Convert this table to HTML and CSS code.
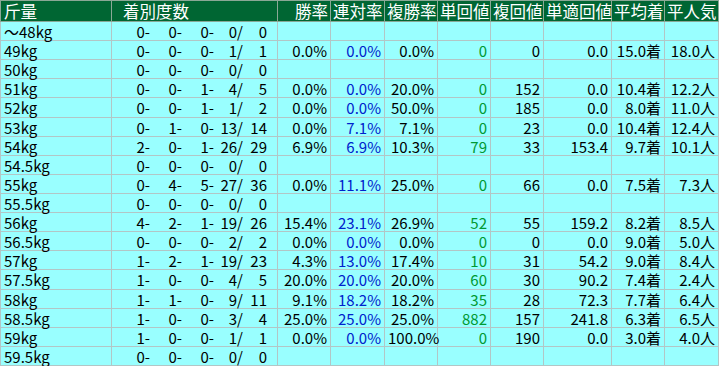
FILE: index.html
```html
<!DOCTYPE html>
<html lang="ja">
<head>
<meta charset="utf-8">
<title>斤量別成績</title>
<link rel="stylesheet" href="styles.css">
</head>
<body>
<table class="stats">
  <colgroup>
    <col class="c-w">
    <col class="c-rec">
    <col class="c-a">
    <col class="c-b">
    <col class="c-a">
    <col class="c-a">
    <col class="c-a">
    <col class="c-c">
    <col class="c-a">
    <col class="c-b">
    <col class="c-x">
  </colgroup>
  <thead>
    <tr>
      <th class="h-left">斤量</th>
      <th class="h-rec">着別度数</th>
      <th>勝率</th>
      <th>連対率</th>
      <th>複勝率</th>
      <th>単回値</th>
      <th>複回値</th>
      <th>単適回値</th>
      <th>平均着</th>
      <th>平人気</th>
      <th></th>
    </tr>
  </thead>
  <tbody>
    <tr><td class="w">〜48kg</td><td class="rec"><span class="f">0-</span><span class="f">0-</span><span class="f">0-</span><span class="f f4">0/</span><span class="f f5">0</span></td><td></td><td></td><td></td><td></td><td></td><td></td><td></td><td></td><td></td></tr>
    <tr><td class="w">49kg</td><td class="rec"><span class="f">0-</span><span class="f">0-</span><span class="f">0-</span><span class="f f4">1/</span><span class="f f5">1</span></td><td>0.0%</td><td class="blue">0.0%</td><td>0.0%</td><td class="green">0</td><td>0</td><td>0.0</td><td>15.0<span class="j">着</span></td><td>18.0<span class="j">人</span></td><td></td></tr>
    <tr><td class="w">50kg</td><td class="rec"><span class="f">0-</span><span class="f">0-</span><span class="f">0-</span><span class="f f4">0/</span><span class="f f5">0</span></td><td></td><td></td><td></td><td></td><td></td><td></td><td></td><td></td><td></td></tr>
    <tr><td class="w">51kg</td><td class="rec"><span class="f">0-</span><span class="f">0-</span><span class="f">1-</span><span class="f f4">4/</span><span class="f f5">5</span></td><td>0.0%</td><td class="blue">0.0%</td><td>20.0%</td><td class="green">0</td><td>152</td><td>0.0</td><td>10.4<span class="j">着</span></td><td>12.2<span class="j">人</span></td><td></td></tr>
    <tr><td class="w">52kg</td><td class="rec"><span class="f">0-</span><span class="f">0-</span><span class="f">1-</span><span class="f f4">1/</span><span class="f f5">2</span></td><td>0.0%</td><td class="blue">0.0%</td><td>50.0%</td><td class="green">0</td><td>185</td><td>0.0</td><td>8.0<span class="j">着</span></td><td>11.0<span class="j">人</span></td><td></td></tr>
    <tr><td class="w">53kg</td><td class="rec"><span class="f">0-</span><span class="f">1-</span><span class="f">0-</span><span class="f f4">13/</span><span class="f f5">14</span></td><td>0.0%</td><td class="blue">7.1%</td><td>7.1%</td><td class="green">0</td><td>23</td><td>0.0</td><td>10.4<span class="j">着</span></td><td>12.4<span class="j">人</span></td><td></td></tr>
    <tr><td class="w">54kg</td><td class="rec"><span class="f">2-</span><span class="f">0-</span><span class="f">1-</span><span class="f f4">26/</span><span class="f f5">29</span></td><td>6.9%</td><td class="blue">6.9%</td><td>10.3%</td><td class="green">79</td><td>33</td><td>153.4</td><td>9.7<span class="j">着</span></td><td>10.1<span class="j">人</span></td><td></td></tr>
    <tr><td class="w">54.5kg</td><td class="rec"><span class="f">0-</span><span class="f">0-</span><span class="f">0-</span><span class="f f4">0/</span><span class="f f5">0</span></td><td></td><td></td><td></td><td></td><td></td><td></td><td></td><td></td><td></td></tr>
    <tr><td class="w">55kg</td><td class="rec"><span class="f">0-</span><span class="f">4-</span><span class="f">5-</span><span class="f f4">27/</span><span class="f f5">36</span></td><td>0.0%</td><td class="blue">11.1%</td><td>25.0%</td><td class="green">0</td><td>66</td><td>0.0</td><td>7.5<span class="j">着</span></td><td>7.3<span class="j">人</span></td><td></td></tr>
    <tr><td class="w">55.5kg</td><td class="rec"><span class="f">0-</span><span class="f">0-</span><span class="f">0-</span><span class="f f4">0/</span><span class="f f5">0</span></td><td></td><td></td><td></td><td></td><td></td><td></td><td></td><td></td><td></td></tr>
    <tr><td class="w">56kg</td><td class="rec"><span class="f">4-</span><span class="f">2-</span><span class="f">1-</span><span class="f f4">19/</span><span class="f f5">26</span></td><td>15.4%</td><td class="blue">23.1%</td><td>26.9%</td><td class="green">52</td><td>55</td><td>159.2</td><td>8.2<span class="j">着</span></td><td>8.5<span class="j">人</span></td><td></td></tr>
    <tr><td class="w">56.5kg</td><td class="rec"><span class="f">0-</span><span class="f">0-</span><span class="f">0-</span><span class="f f4">2/</span><span class="f f5">2</span></td><td>0.0%</td><td class="blue">0.0%</td><td>0.0%</td><td class="green">0</td><td>0</td><td>0.0</td><td>9.0<span class="j">着</span></td><td>5.0<span class="j">人</span></td><td></td></tr>
    <tr><td class="w">57kg</td><td class="rec"><span class="f">1-</span><span class="f">2-</span><span class="f">1-</span><span class="f f4">19/</span><span class="f f5">23</span></td><td>4.3%</td><td class="blue">13.0%</td><td>17.4%</td><td class="green">10</td><td>31</td><td>54.2</td><td>9.0<span class="j">着</span></td><td>8.4<span class="j">人</span></td><td></td></tr>
    <tr><td class="w">57.5kg</td><td class="rec"><span class="f">1-</span><span class="f">0-</span><span class="f">0-</span><span class="f f4">4/</span><span class="f f5">5</span></td><td>20.0%</td><td class="blue">20.0%</td><td>20.0%</td><td class="green">60</td><td>30</td><td>90.2</td><td>7.4<span class="j">着</span></td><td>2.4<span class="j">人</span></td><td></td></tr>
    <tr><td class="w">58kg</td><td class="rec"><span class="f">1-</span><span class="f">1-</span><span class="f">0-</span><span class="f f4">9/</span><span class="f f5">11</span></td><td>9.1%</td><td class="blue">18.2%</td><td>18.2%</td><td class="green">35</td><td>28</td><td>72.3</td><td>7.7<span class="j">着</span></td><td>6.4<span class="j">人</span></td><td></td></tr>
    <tr><td class="w">58.5kg</td><td class="rec"><span class="f">1-</span><span class="f">0-</span><span class="f">0-</span><span class="f f4">3/</span><span class="f f5">4</span></td><td>25.0%</td><td class="blue">25.0%</td><td>25.0%</td><td class="green">882</td><td>157</td><td>241.8</td><td>6.3<span class="j">着</span></td><td>6.5<span class="j">人</span></td><td></td></tr>
    <tr><td class="w">59kg</td><td class="rec"><span class="f">1-</span><span class="f">0-</span><span class="f">0-</span><span class="f f4">1/</span><span class="f f5">1</span></td><td>0.0%</td><td class="blue">0.0%</td><td>100.0%</td><td class="green">0</td><td>190</td><td>0.0</td><td>3.0<span class="j">着</span></td><td>4.0<span class="j">人</span></td><td></td></tr>
    <tr><td class="w">59.5kg</td><td class="rec"><span class="f">0-</span><span class="f">0-</span><span class="f">0-</span><span class="f f4">0/</span><span class="f f5">0</span></td><td></td><td></td><td></td><td></td><td></td><td></td><td></td><td></td><td></td></tr>
  </tbody>
</table>
</body>
</html>
```
FILE: styles.css
```css
html, body {
  margin: 0;
  padding: 0;
  background: #99ffff;
  overflow: hidden;
}

.stats {
  border-collapse: collapse;
  table-layout: fixed;
  width: 728px;
  height: 366px;
  font-family: "Noto Sans CJK JP", sans-serif;
  font-size: 15px;
  color: #000;
  background: #99ffff;
}

.c-w { width: 111px; }
.c-rec { width: 166px; }
.c-a { width: 53px; }
.c-b { width: 54px; }
.c-c { width: 68px; }
.c-x { width: 11px; }

.stats th,
.stats td {
  border: 1px solid #b2c6c6;
  white-space: nowrap;
  vertical-align: middle;
}

.stats td {
  padding: 2px 3px 0 3px;
  line-height: 16px;
  height: 16px;
  text-align: right;
}

.stats th {
  height: 19px;
  padding: 1px 2px 0 2px;
  line-height: 19px;
  background: #006633;
  color: #ffffff;
  font-weight: normal;
  font-size: 16.5px;
  text-align: right;
  border-color: #8aa896;
}

.stats th.h-left {
  text-align: left;
  padding-left: 3px;
}

.stats th.h-rec {
  text-align: left;
  padding-left: 11px;
}

.stats td.w {
  text-align: left;
}

.stats td.rec {
  padding-right: 10px;
}

.f {
  display: inline-block;
  width: 32px;
  text-align: right;
}

.f4 {
  width: 29px;
}

.f5 {
  width: 24px;
}

.j {
  font-size: 15px;
}

.blue {
  color: #0022cc;
}

.green {
  color: #009933;
}
```
